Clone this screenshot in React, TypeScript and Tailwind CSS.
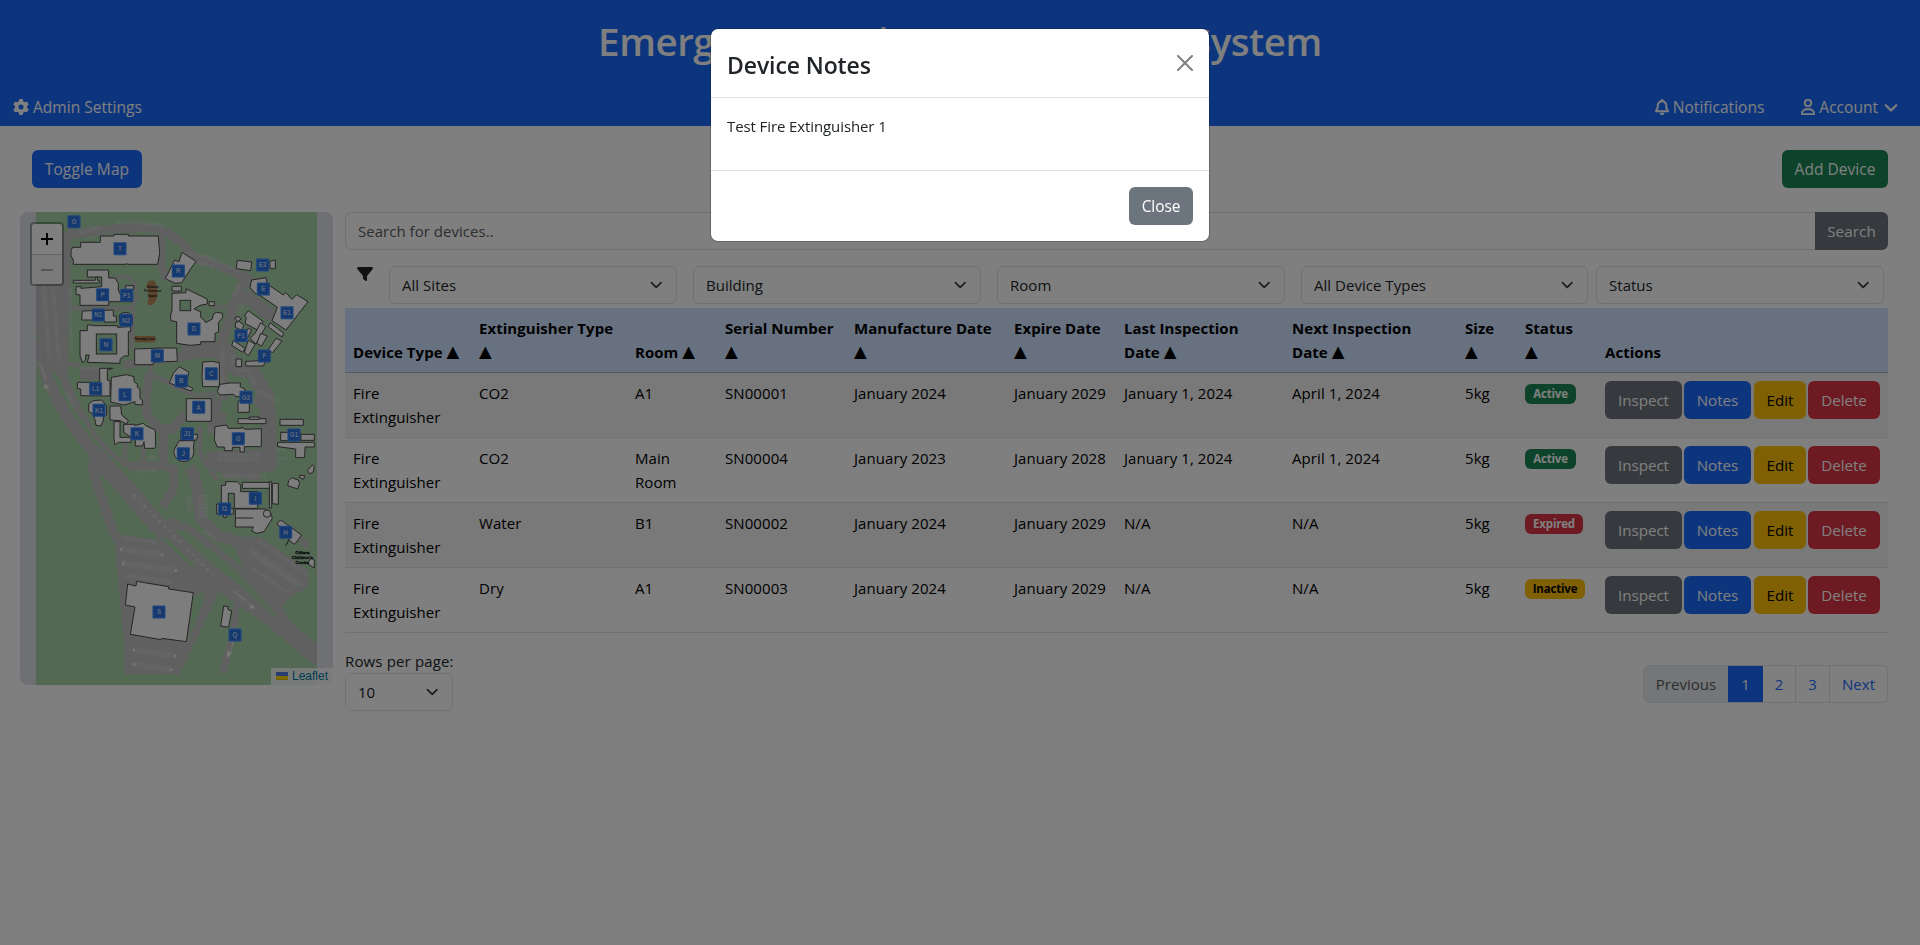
import React from "react";
import { FaChevronDown, FaFilter, FaGear, FaRegBell, FaRegUser } from "react-icons/fa6";

type Status = "Active" | "Expired" | "Inactive";

interface Device {
  type: string;
  ext: string;
  room: string;
  serial: string;
  made: string;
  expires: string;
  last: string;
  next: string;
  size: string;
  status: Status;
}

const devices: Device[] = [
  { type: "Fire Extinguisher", ext: "CO2", room: "A1", serial: "SN00001", made: "January 2024", expires: "January 2029", last: "January 1, 2024", next: "April 1, 2024", size: "5kg", status: "Active" },
  { type: "Fire Extinguisher", ext: "CO2", room: "Main Room", serial: "SN00004", made: "January 2023", expires: "January 2028", last: "January 1, 2024", next: "April 1, 2024", size: "5kg", status: "Active" },
  { type: "Fire Extinguisher", ext: "Water", room: "B1", serial: "SN00002", made: "January 2024", expires: "January 2029", last: "N/A", next: "N/A", size: "5kg", status: "Expired" },
  { type: "Fire Extinguisher", ext: "Dry", room: "A1", serial: "SN00003", made: "January 2024", expires: "January 2029", last: "N/A", next: "N/A", size: "5kg", status: "Inactive" },
];

const badgeStyle: Record<Status, string> = {
  Active: "w-[51px] bg-[#198754] text-white",
  Expired: "w-[58px] bg-[#dc3545] text-white",
  Inactive: "w-[60px] bg-[#ffc107] text-black",
};

const Arrow = () => <span className="inline-block align-[1px] font-['DejaVu_Sans',sans-serif] text-[16.5px] leading-4 font-normal tracking-normal">▲</span>;

const headings: { lines: string[]; sortable: boolean; width: string }[] = [
  { lines: ["Device Type"], sortable: true, width: "w-[126px]" },
  { lines: ["Extinguisher Type", ""], sortable: true, width: "w-[156px]" },
  { lines: ["Room"], sortable: true, width: "w-[90px]" },
  { lines: ["Serial Number", ""], sortable: true, width: "w-[129px]" },
  { lines: ["Manufacture Date", ""], sortable: true, width: "w-[160px]" },
  { lines: ["Expire Date", ""], sortable: true, width: "w-[110px]" },
  { lines: ["Last Inspection", "Date"], sortable: true, width: "w-[168px]" },
  { lines: ["Next Inspection", "Date"], sortable: true, width: "w-[173px]" },
  { lines: ["Size", ""], sortable: true, width: "w-[60px]" },
  { lines: ["Status", ""], sortable: true, width: "w-[80px]" },
  { lines: ["Actions"], sortable: false, width: "w-[291px]" },
];

function Select({ label, className }: { label: string; className: string }) {
  return (
    <div className={`flex h-[38px] shrink-0 items-center justify-between rounded-md border border-[#dee2e6] bg-white px-3 text-[#212529] ${className}`}>
      <span>{label}</span>
      <svg className="h-3 w-4" viewBox="0 0 16 12" fill="none" stroke="#343a40" strokeWidth="1.7" strokeLinecap="round" strokeLinejoin="round">
        <path d="m3.4 3.6 4.8 4.8 4.8-4.8" />
      </svg>
    </div>
  );
}

/* Coordinates below are thirds of a CSS pixel on the campus plan. */
const buildings = [
  "218,142 242,142 242,127 301,127 301,108 342,108 342,103 385,103 385,108 475,108 479,160 473,193 382,193 380,190 376,193 220,193 220,180 213,168 213,152",
  "262,210 326,210 326,234 345,234 355,250 355,270 362,285 398,280 398,305 355,305 326,305 326,316 240,316 240,285 228,283 228,260 243,260 243,265 305,260 305,231 262,231",
  "220,241 286,241 286,232 292,232 292,241 298,241 298,249 220,249",
  "377,262 377,257 401,257 401,268 377,268",
  "247,333 340,330 340,348 349,348 349,366 312,366 312,360 245,360",
  "358,345 368,338 386,338 397,350 397,372 360,372",
  "240,392 262,392 262,375 275,375 279,377 353,377 353,382 392,380 392,395 385,395 385,468 372,468 360,478 360,490 262,487 268,465 257,465 257,480 248,488 240,468",
  "404,447 486,444 530,444 532,484 460,486 460,494 404,494",
  "546,157 588,184 573,205 545,248 525,250 496,236 524,180 537,185",
  "516,259 544,259 544,273 516,273",
  "516,280 558,278 558,266 622,297 622,312 600,316 582,327 602,335 602,352 612,360 617,368 637,357 640,342 650,337 668,340 668,352 655,368 656,395 645,400 645,425 602,425 602,433 570,436 530,430 530,365 512,362 512,345 516,330",
  "627,305 643,305 643,317 627,317",
  "712,181 755,186 752,212 709,206",
  "809,184 826,180 826,206 811,206",
  "755,240 798,233 802,252 850,285 857,277 876,298 890,284 924,305 858,390 816,362 832,322 780,286 765,280 750,262",
  "745,332 790,365 772,390 735,370 739,352 733,348",
  "704,354 714,349 724,357 712,365",
  "706,368 717,364 732,376 724,390 706,382",
  "782,368 797,380 768,432 750,415 765,400",
  "745,385 755,390 742,415 722,415",
  "782,400 802,408 785,438 770,430",
  "700,421 735,445 728,457 695,436",
  "745,421 766,433 745,467 733,457",
  "811,368 851,400 846,411 804,380",
  "828,415 846,423 818,458 804,450",
  "737,484 790,482 800,478 790,498 737,498",
  "708,477 725,477 725,500 708,500",
  "608,486 635,484 658,488 658,560 608,560 606,530",
  "538,500 566,516 560,555 579,565 573,573 508,549 520,520",
  "660,553 690,549 722,549 720,560 735,567 735,590 708,590 700,583 660,585 652,575",
  "714,603 748,603 748,637 714,637",
  "559,596 634,596 634,664 559,664",
  "232,547 299,547 299,505 338,505 322,509 322,540 330,542 330,588 242,587 242,567 232,565",
  "334,532 380,524 402,530 402,545 412,552 412,562 420,567 420,595 427,600 427,615 405,613 405,605 372,615 332,606",
  "266,612 280,602 305,600 320,618 320,645 310,650 310,660 303,678 288,676 284,656 278,641 266,635",
  "330,618 362,618 365,645 385,662 380,672 360,662 330,660",
  "342,665 360,665 360,712 393,712 393,727 355,727 345,735 342,718",
  "371,673 404,673 404,677 430,670 437,677 466,690 467,740 463,745 434,745 432,725 428,738 406,738 406,720 371,697",
  "645,680 680,675 685,685 725,685 725,680 735,688 784,686 784,740 733,740 733,756 720,756 720,742 697,742 697,752 673,752 673,741 652,741 643,720",
  "714,656 798,656 798,671 714,671",
  "748,651 778,651 778,658 748,658",
  "840,658 910,658 910,676 840,676",
  "903,703 943,703 943,721 903,721",
  "842,697 900,697 900,722 842,722",
  "833,727 943,727 943,741 915,741 914,773 887,773 887,747 833,740",
  "664,856 677,856 677,845 712,845 722,855 722,875 773,875 773,925 703,925 703,880 685,880 685,925 700,925 700,942 680,942 680,952 670,952 670,942 650,942 650,912 664,912",
  "727,847 812,847 812,865 727,865",
  "817,850 835,850 835,913 817,911",
  "808,845 815,845 815,924 808,924",
  "706,927 800,927 812,940 817,955 792,995 770,1000 755,993 760,981 706,981",
  "842,960 905,1005 884,1033 866,1020 858,1036 875,1006 830,972",
  "875,833 895,840 899,850 893,867 863,857 866,842",
  "937,795 943,800 940,815 930,822 922,812",
  "900,825 915,828 910,838 898,832",
  "935,1075 943,1080 943,1104 920,1090",
  "383,1152 408,1158 410,1144 506,1160 506,1167 580,1178 559,1325 485,1315 483,1319 391,1303 405,1221 376,1215",
  "671,1218 684,1220 684,1229 695,1232 686,1282 662,1278",
];

const pins: [string, number, number][] = [
  ["O", 222, 65], ["T", 360, 146], ["R", 535, 213], ["E2", 788, 195], ["E", 790, 267], ["P", 308, 284], ["P1", 380, 286],
  ["N1", 295, 345], ["N2", 378, 361], ["E1", 861, 338], ["D", 582, 387], ["F1", 723, 407], ["N", 318, 434], ["M", 472, 467],
  ["F", 793, 468], ["C", 634, 521], ["B", 544, 543], ["L1", 287, 566], ["L", 375, 584], ["G2", 738, 592], ["K1", 297, 631],
  ["A", 596, 622], ["K", 411, 701], ["J1", 562, 701], ["G", 715, 716], ["G1", 882, 705], ["J", 550, 761], ["I", 766, 895],
  ["I1", 674, 927], ["H", 857, 997], ["S", 477, 1236], ["Q", 705, 1305],
];

/* Dashed wide strokes give the hatched look of parking bays. */
const parking: [string, number][] = [
  ["M130 255 L148 472", 13], ["M158 255 L178 486", 12], ["M348 70 C390 64 440 68 492 76", 13], ["M238 100 L300 80", 12],
  ["M568 160 L625 172 L700 207", 11], ["M595 188 L640 198", 10], ["M210 265 L213 450", 11], ["M667 440 L667 560", 13],
  ["M698 290 L718 256", 16], ["M715 340 L730 318", 14], ["M698 465 L698 490", 13], ["M710 510 L752 510", 10],
  ["M238 506 L300 506", 13], ["M200 575 L220 615", 16], ["M770 570 L830 603", 12], ["M656 764 L778 764", 12],
  ["M656 778 L778 778", 11], ["M652 829 L797 829", 12], ["M568 888 L568 938", 13], ["M602 885 L602 954", 13],
  ["M617 885 L617 954", 12], ["M612 994 L652 1023", 12], ["M775 1022 L925 1124", 10], ["M752 1050 L905 1155", 15],
  ["M757 1063 L893 1158", 13], ["M758 1106 L867 1179", 11], ["M417 814 L472 810", 12], ["M448 773 L467 773", 11],
  ["M372 1015 L472 1028", 11], ["M363 1047 L487 1065", 18], ["M368 1090 L528 1112", 18], ["M378 1127 L516 1146", 11],
  ["M402 1350 L526 1367", 18], ["M402 1393 L514 1409", 18], ["M826 748 L850 748", 11], ["M837 775 L863 775", 11],
  ["M620 690 L642 690", 11], ["M755 528 L762 552", 12], ["M260 115 L282 112", 9],
];

function CampusMap() {
  return (
    <svg className="block h-[473px] w-[313px]" viewBox="60 36 939 1419">
      <clipPath id="plan">
        <rect x="108" y="36" width="843" height="1419" />
      </clipPath>
      <rect x="108" y="36" width="843" height="1419" fill="#a9d2a9" />
      <g clipPath="url(#plan)" fill="none" stroke="#c0c1c2" strokeLinejoin="round">
        <path fill="#c0c1c2" stroke="none" d="M108 250 L190 120 L205 110 L205 500 L185 540 L150 500 L108 400Z" />
        <path strokeWidth="26" d="M200 330 L200 110 C260 92 290 92 360 86 C420 80 470 84 500 98 C560 125 560 165 600 178 C660 195 690 215 740 232 L800 285" />
        <path strokeWidth="14" d="M212 60 L212 110 M397 78 L397 105" />
        <path strokeWidth="24" d="M484 100 L484 200 L500 240" />
        <path strokeWidth="10" d="M345 233 C390 225 412 240 410 290 L395 330" />
        <path strokeWidth="30" d="M740 225 L700 320 L665 430 L668 580 L660 700" />
        <path strokeWidth="40" d="M735 285 L790 330 L830 350 M700 300 L760 290" />
        <path strokeWidth="12" d="M205 325 L400 325 L395 450 M640 320 L700 320" />
        <path strokeWidth="14" d="M205 492 L240 495" />
        <path strokeWidth="26" d="M370 497 L400 490 L550 470 L680 445" />
        <path strokeWidth="46" d="M545 450 L680 450 L700 500 L760 520 L800 590 L810 760" />
        <path strokeWidth="14" d="M452 495 L452 525 C500 540 520 560 590 588 L640 580 L650 680" />
        <path strokeWidth="26" d="M448 520 L440 580 L440 640 L470 680 L520 690 L552 640 M490 680 L490 800" />
        <path strokeWidth="34" d="M640 600 L640 700 M645 800 L810 800 L812 640 L770 590" />
        <path strokeWidth="50" d="M620 780 L830 770 M670 810 L780 815" />
        <path strokeWidth="14" d="M600 680 L600 760 L625 800 L650 840" />
        <path strokeWidth="26" d="M385 800 L490 795 L530 815 M520 800 L522 860 L490 920" />
        <path strokeWidth="34" d="M570 800 L590 850 L600 950 L650 1005 L730 1030" />
        <path strokeWidth="36" d="M112 420 Q130 530 195 640 Q240 710 300 775" />
        <path strokeWidth="54" d="M285 765 L385 872 L450 950 L515 1020 L640 1130 L830 1265 L960 1375" />
        <path strokeWidth="14" d="M190 500 Q205 590 260 665 Q320 770 390 795 L480 795 M375 730 V800 M430 740 V800" />
        <path strokeWidth="24" d="M190 530 L225 610 L250 650" />
        <path strokeWidth="26" d="M500 965 Q560 975 620 1030 L720 1115 L845 1240 L850 1285" />
        <path strokeWidth="28" d="M285 770 L275 800 L310 910 L350 1020" />
        <path fill="#c0c1c2" stroke="none" d="M335 985 L365 1005 L475 1020 L565 1100 L600 1120 L655 1165 L645 1200 L540 1422 L372 1422 L372 1325 L345 1040Z" />
        <path fill="#c0c1c2" stroke="none" d="M690 1010 L780 1010 L925 1110 L925 1160 L860 1200 L845 1225 L735 1110Z" />
        <path strokeWidth="20" d="M712 1190 L700 1300 L668 1420 M895 1010 L925 1040" />
        <path strokeWidth="38" d="M240 520 L300 520" />
      </g>
      <g fill="#a9d2a9">
        <ellipse cx="500" cy="612" rx="43" ry="53" />
        <circle cx="550" cy="835" r="14" />
        <path d="M535 990 L560 992 L720 1118 L835 1252 L820 1250 L700 1140Z" opacity="0.8" />
        <path d="M480 1010 L500 1015 L590 1100 L570 1098Z" />
        <path d="M580 1190 L610 1175 L612 1200 L565 1320Z" />
        <path d="M665 600 L705 600 L705 640 L665 640Z" />
      </g>
      <g fill="none" stroke="#dcdddd" strokeDasharray="2.4 3">
        {parking.map(([d, w]) => (
          <path key={d} d={d} strokeWidth={w} opacity="0.6" />
        ))}
      </g>
      <path d="M445 243 q22 -8 25 15 q6 30 -3 45 q-12 20 -24 8 q6 -18 2 -38 q-8 -20 0 -30z" fill="#b98a58" />
      <rect x="404" y="408" width="62" height="19" fill="#b98a58" />
      <g fill="#fafafa" stroke="#4a4a4a" strokeWidth="3">
        {buildings.map((p) => (
          <polygon key={p} points={p} />
        ))}
        <path d="M538 722 L583 722 L580 745 A30 30 0 1 1 522 750Z" />
        <path d="M543 690 L578 690 L580 703 L593 703 L590 720 L543 722Z" />
        <rect x="540" y="301" width="32" height="31" fill="#a9d2a9" />
        <rect x="289" y="402" width="61" height="60" fill="#a9d2a9" />
        <circle cx="801" cy="941" r="11" />
        <path d="M706 954 H760" />
      </g>
      <g fontFamily="Liberation Sans, sans-serif" fontSize="9.5" fontWeight="700" textAnchor="middle" fill="#111">
        <text x="458" y="265">Outdoor</text>
        <text x="458" y="277" textLength="52" lengthAdjust="spacingAndGlyphs">Performance</text>
        <text x="458" y="290">Space</text>
        <text x="435" y="420" textLength="62" lengthAdjust="spacingAndGlyphs">Pasarapa Court</text>
        <g stroke="#111" strokeWidth="0.8" fontSize="13">
          <text x="907" y="1063">Otitara</text>
          <text x="907" y="1077">Children's</text>
          <text x="907" y="1091">Centre</text>
        </g>
      </g>
      <g fill="#eeeeee" fontFamily="Liberation Sans, sans-serif">
        <text transform="translate(398 888) rotate(45.5)" fontSize="13" letterSpacing="12.2">GLOUCESTER STREET</text>
        <text transform="translate(116 490) rotate(68)" fontSize="11">to Hastings</text>
        <text transform="translate(698 1176) rotate(38)" fontSize="12">to Napier</text>
        <path d="M134 552 l14 8 -8 3 8 14 -10 -12 -6 2z M764 1226 l-5 -14 -4 5 -14 -10 12 14 -5 3z M699 1325 l-9 30 -8 -4 -2 26 17 -20 -6 -1 11 -30z" />
        {[[363, 1048], [487, 1065], [370, 1091], [528, 1112], [402, 1350], [526, 1368], [402, 1393], [514, 1409]].map(([x, y]) => (
          <circle key={`${x}-${y}`} cx={x} cy={y} r="4" />
        ))}
      </g>
      <g fontFamily="Liberation Sans, sans-serif" fontSize="19" fontWeight="700" textAnchor="middle">
        {pins.map(([name, x, y]) => (
          <g key={name}>
            <rect x={x - 19.5} y={y - 19.5} width="39" height="39" rx="3" fill="#3a8bff" />
            <rect x={x - 16} y={y - 16} width="32" height="32" fill="#2a72dc" />
            <text x={x} y={y + 7} fill="#b8d2fa">{name}</text>
          </g>
        ))}
      </g>
    </svg>
  );
}

function Header() {
  return (
    <header className="h-[126px] bg-[#1b6bfb] text-white">
      <h1 className="flex h-[88px] items-start justify-center pt-3.5 text-[38.5px] leading-[54px] font-semibold tracking-[-0.45px] whitespace-nowrap">
        Emergency Device Management System
      </h1>
      <nav className="flex h-[38px] items-center justify-between pr-[22px] pl-[13px] text-[15.5px] tracking-[0.02px]">
        <a className="flex items-center gap-1">
          <FaGear className="size-4" />
          Admin Settings
        </a>
        <div className="flex items-center gap-[37px]">
          <a className="flex items-center gap-1">
            <FaRegBell className="h-4 w-3.5" stroke="currentColor" strokeWidth="16" />
            Notifications
          </a>
          <a className="flex items-center gap-1">
            <FaRegUser className="h-4 w-3.5" stroke="currentColor" strokeWidth="16" />
            Account
            <FaChevronDown className="ml-0.5 h-4 w-3.5" stroke="currentColor" strokeWidth="24" />
          </a>
        </div>
      </nav>
    </header>
  );
}

function DeviceTable() {
  return (
    <table className="mt-1 w-[1543px] table-fixed border-collapse text-black">
      <thead>
        <tr className="h-16 border-b border-[#a6b5cc] bg-[#cfe2ff]">
          {headings.map((h) => (
            <th key={h.lines[0]} className={`px-2 pt-[7px] pb-2 text-left align-bottom font-bold tracking-[0.04px] whitespace-nowrap ${h.width}`}>
              {h.lines.map((line, i) => (
                <div key={i} className="h-6">
                  {line}
                  {h.sortable && i === h.lines.length - 1 && <>{line && " "}<Arrow /></>}
                </div>
              ))}
            </th>
          ))}
        </tr>
      </thead>
      <tbody>
        {devices.map((d) => (
          <tr key={d.serial} className="h-[65px] border-b border-[#dee2e6] align-top tracking-[0.08px] odd:bg-[#f2f2f2]">
            {[d.type, d.ext, d.room, d.serial, d.made, d.expires, d.last, d.next, d.size].map((v, i) => (
              <td key={i} className="py-2 pr-1 pl-2">{v}</td>
            ))}
            <td className="p-2 pt-[11px]">
              <span className={`flex h-5 items-center justify-center rounded-md text-[11.5px] font-bold tracking-[-0.2px] ${badgeStyle[d.status]}`}>{d.status}</span>
            </td>
            <td className="p-2">
              <div className="flex text-[15.2px] tracking-[-0.05px] text-white">
                <button className="mr-0.5 h-[38px] w-[77px] rounded-md bg-[#6c757d]">Inspect</button>
                <button className="mr-[3px] h-[38px] w-[67px] rounded-md bg-[#1b6bfb]">Notes</button>
                <button className="mr-0.5 h-[38px] w-[52px] rounded-md bg-[#ffc107] text-black">Edit</button>
                <button className="h-[38px] w-[72px] rounded-md bg-[#dc3545]">Delete</button>
              </div>
            </td>
          </tr>
        ))}
      </tbody>
    </table>
  );
}

function NotesModal() {
  return (
    <div className="fixed inset-0 flex items-start justify-center bg-black/50 pt-7 tracking-[-0.1px]">
      <div className="w-[500px] rounded-lg border border-black/20 bg-white bg-clip-padding text-[#212529]">
        <div className="flex h-[69px] items-center justify-between border-b border-[#dee2e6] px-4">
          <h5 className="pt-[3px] text-[23px] leading-9 font-semibold tracking-[-0.1px]">Device Notes</h5>
          <svg className="size-4 opacity-50" viewBox="0 0 16 16" fill="#000">
            <path d="M.293.293a1 1 0 0 1 1.414 0L8 6.586 14.293.293a1 1 0 1 1 1.414 1.414L9.414 8l6.293 6.293a1 1 0 0 1-1.414 1.414L8 9.414l-6.293 6.293a1 1 0 0 1-1.414-1.414L6.586 8 .293 1.707a1 1 0 0 1 0-1.414z" />
          </svg>
        </div>
        <p className="h-[72px] p-4">Test Fire Extinguisher 1</p>
        <div className="flex h-[71px] items-center justify-end border-t border-[#dee2e6] px-4">
          <button className="h-[38px] w-16 rounded-md bg-[#6c757d] text-[15.5px] text-white">Close</button>
        </div>
      </div>
    </div>
  );
}

export default function App() {
  return (
    <div className="h-[945px] w-[1920px] overflow-hidden bg-white font-['Open_Sans','Noto_Sans',sans-serif] text-[15px] leading-6 tracking-[0.03px] text-[#212529]">
      <Header />
      <div className="flex h-[86px] items-center justify-between px-8 text-[15.5px]">
        <button className="h-[38px] w-[110px] rounded-md bg-[#1b6bfb] tracking-[0.1px] text-white">Toggle Map</button>
        <button className="h-[38px] w-[106px] rounded-md bg-[#198754] text-white">Add Device</button>
      </div>
      <main className="flex gap-3 pl-5">
        <div className="relative h-[473px] w-[313px] shrink-0 overflow-hidden rounded-lg bg-[#dfe1e8]">
          <CampusMap />
          <div className="absolute top-2.5 left-2.5 flex w-[34px] flex-col overflow-hidden rounded border-2 border-black/30 bg-white bg-clip-padding">
            <span className="flex h-[31px] items-center justify-center border-b border-[#ccc]">
              <svg className="size-3" viewBox="0 0 12 12" stroke="#000" strokeWidth="2"><path d="M0 6h12M6 0v12" /></svg>
            </span>
            <span className="flex h-[29px] items-center justify-center bg-[#f4f4f4]">
              <svg className="size-3" viewBox="0 0 12 12" stroke="#aaa" strokeWidth="2"><path d="M0 6h12" /></svg>
            </span>
          </div>
          <div className="absolute right-0 bottom-0 flex h-[17px] items-center gap-1 bg-white/80 px-[5px] pb-0.5 font-['Liberation_Sans',sans-serif] text-xs tracking-normal text-[#0078a8]">
            <svg className="h-2 w-3" viewBox="0 0 12 8"><path fill="#4C7BE1" d="M0 0h12v4H0z" /><path fill="#FFD500" d="M0 4h12v3H0z" /><path fill="#E0BC00" d="M0 7h12v1H0z" /></svg>
            <span>Leaflet</span>
          </div>
        </div>
        <section className="w-[1543px]">
          <div className="flex h-[38px]">
            <div className="flex grow items-center rounded-l-md border border-r-0 border-[#dee2e6] pl-3 text-[#595c5f]">Search for devices..</div>
            <button className="w-[73px] rounded-r-md bg-[#6c757d] text-[15.3px] text-white">Search</button>
          </div>
          <div className="mt-4 flex pl-3">
            <FaFilter className="mr-4 size-4" />
            <Select label="All Sites" className="mr-4 w-[288px]" />
            <Select label="Building" className="mr-4 w-[288px]" />
            <Select label="Room" className="mr-4 w-[288px]" />
            <Select label="All Device Types" className="mr-2 w-[287px]" />
            <Select label="Status" className="w-[288px]" />
          </div>
          <DeviceTable />
          <div className="mt-4 flex items-start justify-between">
            <div>
              <div className="tracking-[0.15px]">Rows per page:</div>
              <Select label="10" className="w-[108px]" />
            </div>
            <div className="mt-4 flex h-[38px] w-[245px] overflow-hidden rounded-md border border-[#dee2e6] text-center leading-9 text-[#1b6bfb]">
              <span className="w-[84px] bg-[#e9ecef] text-[#595c5f]">Previous</span>
              <span className="-my-px w-[35px] bg-[#1b6bfb] leading-[38px] text-white">1</span>
              <span className="w-[33px] border-r border-[#dee2e6]">2</span>
              <span className="w-[34px] border-r border-[#dee2e6]">3</span>
              <span className="grow">Next</span>
            </div>
          </div>
        </section>
      </main>
      <NotesModal />
    </div>
  );
}
